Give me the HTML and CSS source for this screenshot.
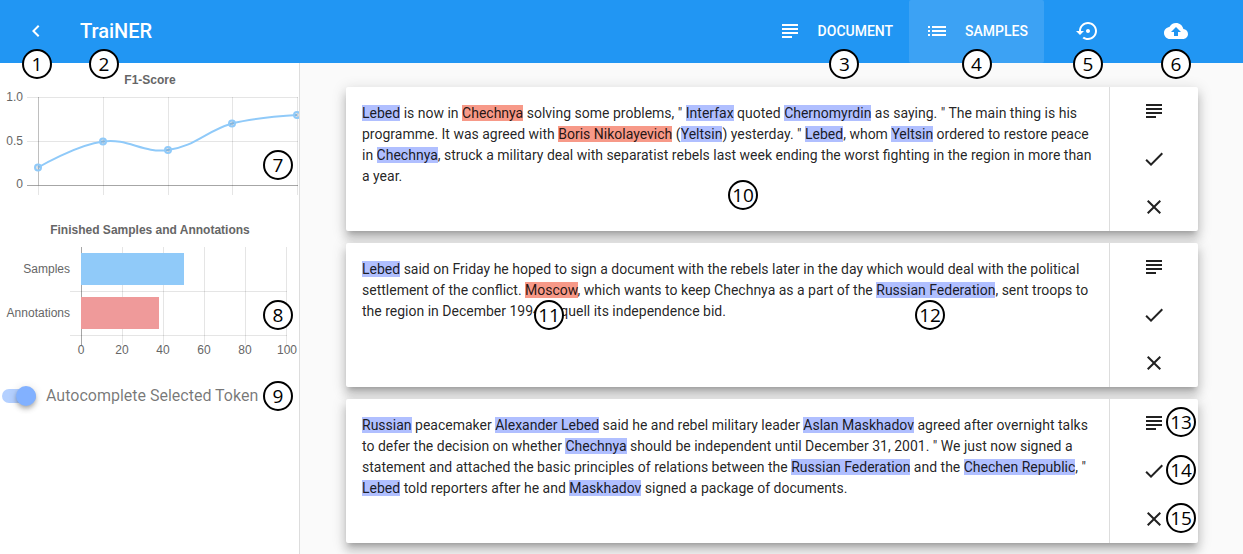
FILE: index.html
```html
<!DOCTYPE html>
<html lang="en">
<head>
<meta charset="utf-8">
<meta name="viewport" content="width=device-width, initial-scale=1">
<title>TraiNER</title>
<link rel="stylesheet" href="styles.css">
</head>
<body>
<svg class="defs" aria-hidden="true">
  <symbol id="subject" viewBox="0 0 24 24"><path d="M14 17H4v2h10v-2zm6-8H4v2h16V9zM4 15h16v-2H4v2zM4 5v2h16V5H4z"/></symbol>
  <symbol id="check" viewBox="0 0 24 24"><path d="M9 16.17L4.83 12l-1.42 1.41L9 19 21 7l-1.41-1.41z"/></symbol>
  <symbol id="close" viewBox="0 0 24 24"><path d="M19 6.41L17.59 5 12 10.59 6.41 5 5 6.41 10.59 12 5 17.59 6.41 19 12 13.41 17.59 19 19 17.59 13.41 12z"/></symbol>
</svg>

<header class="toolbar">
  <button class="back" type="button" aria-label="Back">
    <svg class="icon" viewBox="0 0 24 24"><path d="M15.41 7.41L14 6l-6 6 6 6 1.41-1.41L10.83 12z"/></svg>
    <span class="callout on-back">1</span>
  </button>
  <h1 class="title">TraiNER<span class="callout on-title">2</span></h1>
  <nav class="nav">
    <button class="nav-item" type="button">
      <svg class="icon"><use href="#subject"/></svg>Document
      <span class="callout on-nav">3</span>
    </button>
    <button class="nav-item active" type="button">
      <svg class="icon" viewBox="0 0 24 24"><path d="M3 13h2v-2H3v2zm0 4h2v-2H3v2zm0-8h2V7H3v2zm4 4h14v-2H7v2zm0 4h14v-2H7v2zM7 7v2h14V7H7z"/></svg>Samples
      <span class="callout on-icon">4</span>
    </button>
    <button class="nav-item" type="button" aria-label="Restore">
      <svg class="icon" viewBox="0 0 24 24"><path d="M14 12c0-1.1-.9-2-2-2s-2 .9-2 2 .9 2 2 2 2-.9 2-2zm-2-9c-4.97 0-9 4.03-9 9H0l4 4 4-4H5c0-3.87 3.13-7 7-7s7 3.13 7 7-3.13 7-7 7c-1.51 0-2.91-.49-4.06-1.3l-1.42 1.44C8.04 20.3 9.94 21 12 21c4.97 0 9-4.03 9-9s-4.03-9-9-9z"/></svg>
      <span class="callout on-icon">5</span>
    </button>
    <button class="nav-item" type="button" aria-label="Upload">
      <svg class="icon" viewBox="0 0 24 24"><path d="M19.35 10.04C18.67 6.59 15.64 4 12 4 9.11 4 6.6 5.64 5.35 8.04 2.34 8.36 0 10.91 0 14c0 3.31 2.69 6 6 6h13c2.76 0 5-2.24 5-5 0-2.64-2.05-4.78-4.65-4.96zM14 13v4h-4v-4H7l5-5 5 5h-3z"/></svg>
      <span class="callout on-icon">6</span>
    </button>
  </nav>
</header>

<div class="layout">
  <aside class="sidebar">
    <figure class="chart">
      <svg viewBox="0 0 299 150" role="img" aria-label="F1-Score line chart">
        <text class="chart-title" x="150" y="21">F1-Score</text>
        <path class="grid" d="M27 34.5H298M27 78.5H298M103.5 34V132M168.5 34V132M232.5 34V132M297.5 34V132"/>
        <path class="grid" d="M38.500 122V132"/>
        <path class="axis-soft" d="M38.500 34V122"/>
        <path class="axis" d="M27 122.500H298"/>
        <g class="label end"><text x="23" y="38">1.0</text><text x="23" y="82">0.5</text><text x="23" y="125">0</text></g>
        <path class="curve" d="M38 104.500C38 104.500 76 82 103 78.500C128 75 143 90.500 168 87C195 83.500 206 68 232 60.500C257 54 297 52 297 52"/>
        <g class="points"><circle cx="38" cy="104.500" r="3"/><circle cx="103" cy="78.500" r="3"/><circle cx="168" cy="87" r="3"/><circle cx="232" cy="60.500" r="3"/><circle cx="297" cy="52" r="3"/></g>
      </svg>
      <span class="callout on-chart">7</span>
    </figure>
    <figure class="chart">
      <svg viewBox="0 0 299 150" role="img" aria-label="Finished samples and annotations bar chart">
        <text class="chart-title" x="150" y="21">Finished Samples and Annotations</text>
        <path class="grid" d="M70 78.500H287M70 122.500H287M122.500 34V132M163.500 34V132M204.500 34V132M245.500 34V132M286.500 34V132"/>
        <path class="axis" d="M81.500 34V132"/>
        <rect class="bar-samples" x="81" y="40" width="103" height="32"/>
        <rect class="bar-annotations" x="81" y="84" width="78" height="32"/>
        <g class="label end"><text x="70" y="60">Samples</text><text x="70" y="104">Annotations</text></g>
        <g class="label mid"><text x="81" y="141">0</text><text x="122" y="141">20</text><text x="163" y="141">40</text><text x="204" y="141">60</text><text x="245" y="141">80</text><text x="287" y="141">100</text></g>
      </svg>
      <span class="callout on-chart">8</span>
    </figure>
    <div class="switch-row">
      <input class="switch" type="checkbox" id="autocomplete" checked>
      <label for="autocomplete">Autocomplete Selected Token</label>
      <span class="callout on-switch">9</span>
    </div>
  </aside>

  <main class="samples">
    <article class="card">
      <p class="text"><mark>Lebed</mark> is now in <mark class="red">Chechnya</mark> solving some problems, " <mark>Interfax</mark> quoted <mark>Chernomyrdin</mark> as saying. " The main thing is his programme. It was agreed with <mark class="red">Boris Nikolayevich</mark> (<mark>Yeltsin</mark>) yesterday. " <mark>Lebed</mark>, whom <mark>Yeltsin</mark> ordered to restore peace in <mark>Chechnya</mark>, struck a military deal with separatist rebels last week ending the worst fighting in the region in more than a year.</p>
      <div class="actions">
        <button type="button" aria-label="Open document"><svg class="icon"><use href="#subject"/></svg></button>
        <button type="button" aria-label="Accept"><svg class="icon"><use href="#check"/></svg></button>
        <button type="button" aria-label="Reject"><svg class="icon"><use href="#close"/></svg></button>
      </div>
      <span class="callout on-card">10</span>
    </article>
    <article class="card">
      <p class="text"><mark>Lebed</mark> said on Friday he hoped to sign a document with the rebels later in the day which would deal with the political settlement of the conflict. <mark class="red">Moscow</mark>, which wants to keep Chechnya as a part of the <mark>Russian Federation</mark>, sent troops to the region in December 1994 to quell its independence bid.</p>
      <div class="actions">
        <button type="button" aria-label="Open document"><svg class="icon"><use href="#subject"/></svg></button>
        <button type="button" aria-label="Accept"><svg class="icon"><use href="#check"/></svg></button>
        <button type="button" aria-label="Reject"><svg class="icon"><use href="#close"/></svg></button>
      </div>
      <span class="callout on-red">11</span>
      <span class="callout on-blue">12</span>
    </article>
    <article class="card">
      <p class="text"><mark>Russian</mark> peacemaker <mark>Alexander Lebed</mark> said he and rebel military leader <mark>Aslan Maskhadov</mark> agreed after overnight talks to defer the decision on whether <mark>Chechnya</mark> should be independent until December 31, 2001. " We just now signed a statement and attached the basic principles of relations between the <mark>Russian Federation</mark> and the <mark>Chechen Republic</mark>, " <mark>Lebed</mark> told reporters after he and <mark>Maskhadov</mark> signed a package of documents.</p>
      <div class="actions">
        <button type="button" aria-label="Open document"><svg class="icon"><use href="#subject"/></svg><span class="callout on-action">13</span></button>
        <button type="button" aria-label="Accept"><svg class="icon"><use href="#check"/></svg><span class="callout on-action">14</span></button>
        <button type="button" aria-label="Reject"><svg class="icon"><use href="#close"/></svg><span class="callout on-action">15</span></button>
      </div>
    </article>
  </main>
</div>
</body>
</html>
```

FILE: styles.css
```css
* { box-sizing: border-box; }

body {
  margin: 0;
  min-height: 100vh;
  display: flex;
  flex-direction: column;
  background: #fafafa;
  color: rgba(0, 0, 0, 0.87);
  font: 14px/21px Roboto, sans-serif;
}

button {
  padding: 0;
  border: 0;
  background: none;
  color: inherit;
  font: inherit;
  cursor: pointer;
}

.defs { position: absolute; width: 0; height: 0; }

.icon {
  display: block;
  flex: none;
  width: 24px;
  height: 24px;
  fill: currentColor;
}

/* Toolbar */
.toolbar {
  display: flex;
  align-items: stretch;
  height: 63px;
  padding: 0 23px 0 12px;
  background: #2196f3;
  color: #fff;
}

.back {
  position: relative;
  display: grid;
  place-items: center;
  width: 48px;
  padding-bottom: 1px;
}

.title {
  position: relative;
  margin: 0 auto 0 20px;
  font-size: 20px;
  font-weight: 500;
  line-height: 62px;
}

.nav { display: flex; }

.nav-item {
  position: relative;
  display: flex;
  align-items: center;
  justify-content: center;
  gap: 16px;
  min-width: 88px;
  padding: 0 16px 1px;
  border-radius: 2px;
  font-weight: 500;
  text-transform: uppercase;
}

.nav-item.active { background: rgba(255, 255, 255, 0.12); }

/* Layout */
.layout {
  flex: 1;
  display: grid;
  grid-template-columns: 300px 1fr;
}

.sidebar {
  border-right: 1px solid #ddd;
  background: #fff;
}

.samples {
  display: flex;
  flex-direction: column;
  gap: 12px;
  padding: 24px 45px 11px 46px;
}

/* Charts */
.chart { position: relative; margin: 0; }
.chart svg { display: block; width: 100%; }

.chart text {
  fill: #666;
  font: 12px "Liberation Sans", Arial, sans-serif;
}

.chart .chart-title { font-weight: bold; text-anchor: middle; }
.end { text-anchor: end; }
.mid { text-anchor: middle; }
.grid { stroke: rgba(0, 0, 0, 0.1); }
.axis { stroke: rgba(0, 0, 0, 0.35); }
.axis-soft { stroke: rgba(0, 0, 0, 0.25); }
.curve { fill: none; stroke: #90caf9; stroke-width: 2; }
.points { fill: rgba(0, 0, 0, 0.1); stroke: #90caf9; stroke-width: 2; }
.bar-samples { fill: #90caf9; }
.bar-annotations { fill: #ef9a9a; }

/* Switch */
.switch-row {
  position: relative;
  display: flex;
  align-items: center;
  gap: 10px;
  padding-top: 20px;
  color: rgba(0, 0, 0, 0.54);
  font-size: 16px;
  line-height: 26px;
}

.switch {
  appearance: none;
  position: relative;
  width: 34px;
  height: 14px;
  margin: 0 0 0 2px;
  border-radius: 7px;
  background: #b4d0ff;
}

.switch::before {
  content: "";
  position: absolute;
  top: -3px;
  right: 0;
  width: 20px;
  height: 20px;
  border-radius: 50%;
  background: #82b1ff;
  box-shadow: 0 2px 4px -1px rgba(0, 0, 0, 0.2), 0 4px 5px rgba(0, 0, 0, 0.14), 0 1px 10px rgba(0, 0, 0, 0.12);
}

/* Sample cards */
.card {
  position: relative;
  display: flex;
  border-radius: 2px;
  background: #fff;
  box-shadow: 0 5px 5px -3px rgba(0, 0, 0, 0.2), 0 8px 10px 1px rgba(0, 0, 0, 0.14), 0 3px 14px 2px rgba(0, 0, 0, 0.12);
}

.text { flex: 1; margin: 0; padding: 16px; }

mark { background: #b0bfff; color: inherit; }
mark.red { background: #f79988; }

.actions {
  display: flex;
  flex-direction: column;
  width: 89px;
  border-left: 1px solid #ddd;
}

.actions button {
  position: relative;
  display: grid;
  place-items: center;
  height: 48px;
}

/* Numbered callouts lying over the interface */
.callout {
  position: absolute;
  z-index: 1;
  display: grid;
  place-items: center;
  width: 30px;
  height: 30px;
  border: 2px solid #000;
  border-radius: 50%;
  background: #fff;
  color: #000;
  font: 19px/26px "Open Sans", sans-serif;
}

.on-back { top: 49px; left: 10px; }
.on-title { top: 49px; left: 9px; }
.on-nav { top: 49px; left: calc(50% - 6px); }
.on-icon { top: 49px; left: calc(50% - 15px); }
.on-chart { top: 87px; right: 6px; }
.on-switch { top: 18px; right: 6px; }
.on-card { top: 93px; left: 382px; }
.on-red { top: 57px; left: 188px; }
.on-blue { top: 57px; left: 569px; }
.on-action { top: 8px; right: 2px; }
```
